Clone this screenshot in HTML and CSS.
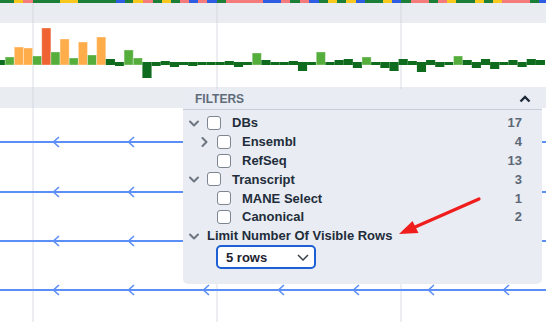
FILE: index.html
```html
<!DOCTYPE html>
<html lang="en">
<head>
    <meta charset="UTF-8">
    <meta name="viewport" content="width=device-width, initial-scale=1.0">
    <title>Track Filters</title>
    <link rel="stylesheet" href="styles.css">
</head>
<body>
    <div class="browser">
        <div class="strip" id="strip"></div>
        <div class="band"></div>
        <div class="chart">
            <svg id="bars" width="546" height="64"></svg>
        </div>
        <div class="band band-lower"></div>
        <div class="tracks">
            <svg width="546" height="214">
                <defs>
                    <pattern id="arrows" x="0" y="-6" width="75" height="12" patternUnits="userSpaceOnUse">
                        <path d="M59 1 L53.5 6 L59 11" fill="none" stroke="#5b8ef7" stroke-width="1.6"/>
                    </pattern>
                </defs>
                <g transform="translate(0,34)">
                    <line x1="0" y1="0" x2="546" y2="0" class="track-line"/>
                    <rect x="0" y="-6" width="546" height="12" fill="url(#arrows)"/>
                </g>
                <g transform="translate(0,84)">
                    <line x1="0" y1="0" x2="546" y2="0" class="track-line"/>
                    <rect x="0" y="-6" width="546" height="12" fill="url(#arrows)"/>
                </g>
                <g transform="translate(0,133)">
                    <line x1="0" y1="0" x2="546" y2="0" class="track-line"/>
                    <rect x="0" y="-6" width="546" height="12" fill="url(#arrows)"/>
                </g>
                <g transform="translate(0,182)">
                    <line x1="0" y1="0" x2="546" y2="0" class="track-line"/>
                    <rect x="0" y="-6" width="546" height="12" fill="url(#arrows)"/>
                </g>
            </svg>
        </div>

        <div class="filters">
            <div class="filters-head">
                <span class="filters-title">Filters</span>
                <svg class="caret" width="12" height="8" viewBox="0 0 12 8"><path d="M1.5 6.5 L6 2 L10.5 6.5"/></svg>
            </div>
            <ul class="filter-list">
                <li class="row">
                    <span class="toggle"><svg width="10" height="10" viewBox="0 0 10 10"><path d="M1 3.5 L5 7.5 L9 3.5"/></svg></span>
                    <span class="check"></span>
                    <span class="name">DBs</span>
                    <span class="count">17</span>
                </li>
                <li class="row child">
                    <span class="toggle"><svg width="10" height="10" viewBox="0 0 10 10"><path d="M3.5 1 L7.5 5 L3.5 9"/></svg></span>
                    <span class="check"></span>
                    <span class="name">Ensembl</span>
                    <span class="count">4</span>
                </li>
                <li class="row child">
                    <span class="toggle"></span>
                    <span class="check"></span>
                    <span class="name">RefSeq</span>
                    <span class="count">13</span>
                </li>
                <li class="row">
                    <span class="toggle"><svg width="10" height="10" viewBox="0 0 10 10"><path d="M1 3.5 L5 7.5 L9 3.5"/></svg></span>
                    <span class="check"></span>
                    <span class="name">Transcript</span>
                    <span class="count">3</span>
                </li>
                <li class="row child">
                    <span class="toggle"></span>
                    <span class="check"></span>
                    <span class="name">MANE Select</span>
                    <span class="count">1</span>
                </li>
                <li class="row child">
                    <span class="toggle"></span>
                    <span class="check"></span>
                    <span class="name">Canonical</span>
                    <span class="count">2</span>
                </li>
                <li class="row">
                    <span class="toggle"><svg width="10" height="10" viewBox="0 0 10 10"><path d="M1 3.5 L5 7.5 L9 3.5"/></svg></span>
                    <span class="name">Limit Number Of Visible Rows</span>
                </li>
            </ul>
            <div class="select">
                <span>5 rows</span>
                <svg width="12" height="7" viewBox="0 0 12 7"><path d="M1 1 L6 6 L11 1"/></svg>
            </div>
        </div>

        <svg class="annotation" width="546" height="322">
            <line x1="479" y1="199" x2="414" y2="227.5" stroke="#f01d1d" stroke-width="3.2" stroke-linecap="round"/>
            <polygon points="399,234 412.5,221 418.5,233" fill="#f01d1d"/>
        </svg>
    </div>

    <script>
        // colour blocks along the top of the view
        const stripColors = { g: '#1b7f38', y: '#f9c81f', p: '#f47a7c', b: '#2e5ce2' };
        const stripData = [
            ['g', 14], ['y', 9], ['p', 10], ['g', 27], ['y', 18], ['g', 38], ['b', 9], ['g', 8],
            ['y', 10], ['p', 10], ['g', 9], ['y', 9], ['g', 9], ['p', 9], ['b', 9], ['p', 9],
            ['b', 10], ['g', 9], ['p', 37], ['b', 18], ['p', 9], ['g', 10], ['p', 9], ['b', 10],
            ['g', 9], ['y', 9], ['g', 9], ['y', 10], ['b', 9], ['g', 18], ['y', 9], ['b', 9],
            ['g', 10], ['p', 18], ['g', 9], ['p', 9], ['y', 9], ['g', 19], ['y', 9], ['g', 9],
            ['y', 9], ['p', 28], ['g', 9], ['b', 7]
        ];
        const strip = document.getElementById('strip');
        stripData.forEach(([c, w]) => {
            const seg = document.createElement('span');
            seg.style.width = w + 'px';
            seg.style.background = stripColors[c];
            strip.appendChild(seg);
        });

        // coverage bars: type + value (px above / below the baseline)
        const barColors = { d: '#0f6b1d', l: '#55ad3c', o: '#ffad4b', r: '#ef6231' };
        const bars = [
            ['d', 2], ['l', 8], ['o', 18], ['o', 17], ['l', 9], ['r', 37], ['l', 13], ['o', 26],
            ['l', 7], ['o', 23], ['l', 10], ['o', 28], ['d', 3], ['d', -1], ['l', 15], ['l', 7],
            ['d', -13], ['d', -1], ['d', 1], ['d', -2], ['d', 0], ['d', -1], ['d', 0], ['d', 0],
            ['d', 0], ['d', 1], ['d', -2], ['d', 0], ['l', 12], ['d', 2], ['d', 0], ['d', 0],
            ['d', 1], ['d', -6], ['d', 0], ['l', 13], ['d', 0], ['d', 2], ['d', 3], ['d', -3],
            ['l', 8], ['d', 0], ['d', -3], ['d', -6], ['d', 3], ['d', 1], ['d', -7], ['d', 2],
            ['d', -2], ['d', 0], ['l', 9], ['d', 2], ['d', -3], ['d', 3], ['d', -4], ['d', 0],
            ['d', 2], ['d', -2], ['d', 3], ['d', 2]
        ];
        const svg = document.getElementById('bars');
        const ns = 'http://www.w3.org/2000/svg';
        const step = 9.15;
        const base = 42;
        bars.forEach(([t, v], i) => {
            const rect = document.createElementNS(ns, 'rect');
            let top, bottom;
            if (t === 'd') {
                top = v >= 0 ? base - 3 - v : base - 3;
                bottom = v >= 0 ? base : base - v;
            } else {
                top = base - v;
                bottom = base;
            }
            rect.setAttribute('x', (-4 + step * i).toFixed(2));
            rect.setAttribute('y', top);
            rect.setAttribute('width', step.toFixed(2));
            rect.setAttribute('height', bottom - top);
            rect.setAttribute('fill', barColors[t]);
            if (t !== 'd') rect.setAttribute('class', 'bar-edge');
            svg.appendChild(rect);
        });
    </script>
</body>
</html>
```

FILE: styles.css
```css
body {
    margin: 0;
    font-family: "Liberation Sans", Arial, sans-serif;
    background: #fff;
}
.browser {
    position: relative;
    width: 546px;
    height: 322px;
    overflow: hidden;
}
.strip {
    display: flex;
    height: 3px;
}
.strip span {
    flex: none;
    height: 3px;
}
.band,
.chart,
.tracks {
    background-image: repeating-linear-gradient(90deg, transparent 0 32px, var(--grid) 32px 34px, transparent 34px 184px);
}
.band {
    --grid: #dfe3e9;
    height: 20px;
    background-color: #e9ecf1;
}
.band-lower {
    height: 21px;
}
.chart {
    --grid: #eceef1;
    height: 64px;
    background-color: #fff;
}
.chart svg,
.tracks svg {
    display: block;
}
.bar-edge {
    stroke: rgba(255, 255, 255, 0.35);
    stroke-width: 1;
}
.tracks {
    --grid: #eceef1;
    height: 214px;
    background-color: #fff;
}
.track-line {
    stroke: #5b8ef7;
    stroke-width: 2;
}

.filters {
    position: absolute;
    top: 89px;
    left: 183px;
    width: 359px;
    background: #e9ecf2;
    border-radius: 5px;
    padding-bottom: 15px;
}
.filters-head {
    display: flex;
    align-items: center;
    justify-content: space-between;
    height: 20px;
    padding: 0 11px 0 12px;
    border-bottom: 1px solid #c7cdd7;
}
.filters-title {
    font-size: 12px;
    font-weight: bold;
    color: #606b7a;
    text-transform: uppercase;
}
.caret path {
    fill: none;
    stroke: #1f2937;
    stroke-width: 2.4;
}
.filter-list {
    list-style: none;
    margin: 0;
    padding: 3.6px 20px 0 6px;
}
.row {
    display: flex;
    align-items: center;
    height: 18.8px;
    font-size: 13px;
    font-weight: bold;
    color: #222c3b;
}
.row.child {
    padding-left: 10px;
}
.toggle {
    flex: none;
    width: 18px;
    display: flex;
    align-items: center;
}
.toggle path {
    fill: none;
    stroke: #6e7682;
    stroke-width: 2;
    stroke-linecap: round;
    stroke-linejoin: round;
}
.check {
    flex: none;
    width: 12px;
    height: 12px;
    border: 1px solid #7e8692;
    border-radius: 3px;
    background: #fff;
    margin-right: 11px;
}
.count {
    margin-left: auto;
    color: #5d6877;
}
.select {
    display: flex;
    align-items: center;
    justify-content: space-between;
    box-sizing: border-box;
    width: 100px;
    height: 24px;
    margin-left: 33px;
    padding: 0 5px 0 8px;
    background: #fff;
    border: 2px solid #1d5fd4;
    border-radius: 5px;
    font-size: 13px;
    font-weight: bold;
    color: #1c2330;
}
.select path {
    fill: none;
    stroke: #3a404a;
    stroke-width: 1.5;
}
.annotation {
    position: absolute;
    top: 0;
    left: 0;
    pointer-events: none;
}
```
